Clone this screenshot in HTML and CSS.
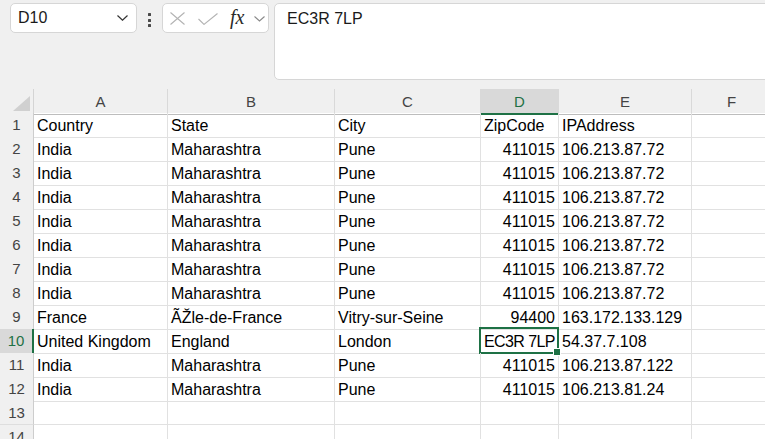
FILE: index.html
```html
<!DOCTYPE html>
<html lang="en">
<head>
<meta charset="utf-8">
<title>Sheet</title>
<link rel="stylesheet" href="styles.css">
</head>
<body>
<div class="app">
  <div class="toolbar">
    <div class="namebox">
      <span class="name">D10</span>
      <svg class="chev" width="11" height="6" viewBox="0 0 11 6"><polyline points="0.5,0.5 5.5,5.2 10.5,0.5" fill="none" stroke="#333" stroke-width="1.2"/></svg>
    </div>
    <div class="dots"><i></i><i></i><i></i></div>
    <div class="fxgroup">
      <svg class="ico-x" width="15" height="13" viewBox="0 0 15 13"><path d="M0.5 0.5 L14.5 12.5 M14.5 0.5 L0.5 12.5" stroke="#b3b3b3" stroke-width="1.1" fill="none"/></svg>
      <svg class="ico-check" width="20" height="12" viewBox="0 0 20 12"><polyline points="0.5,6 6,11.4 19.5,0.5" fill="none" stroke="#b3b3b3" stroke-width="1.1"/></svg>
      <span class="fx">fx</span>
      <svg class="ico-chev" width="11" height="6" viewBox="0 0 11 6"><polyline points="0.5,0.5 5.5,5 10.5,0.5" fill="none" stroke="#8a8a8a" stroke-width="1.1"/></svg>
    </div>
    <div class="formula">EC3R 7LP</div>
  </div>

  <div class="sheet">
    <div class="row head">
      <div class="corner"><svg width="17" height="15" viewBox="0 0 17 15"><polygon points="17,0 17,15 0,15" fill="#d0d0d0"/></svg></div>
      <div class="colh">A</div>
      <div class="colh">B</div>
      <div class="colh">C</div>
      <div class="colh sel">D</div>
      <div class="colh">E</div>
      <div class="colh">F</div>
    </div>

    <div class="row"><div class="rowh">1</div><div class="c">Country</div><div class="c">State</div><div class="c">City</div><div class="c">ZipCode</div><div class="c">IPAddress</div><div class="c"></div></div>
    <div class="row"><div class="rowh">2</div><div class="c">India</div><div class="c">Maharashtra</div><div class="c">Pune</div><div class="c num">411015</div><div class="c">106.213.87.72</div><div class="c"></div></div>
    <div class="row"><div class="rowh">3</div><div class="c">India</div><div class="c">Maharashtra</div><div class="c">Pune</div><div class="c num">411015</div><div class="c">106.213.87.72</div><div class="c"></div></div>
    <div class="row"><div class="rowh">4</div><div class="c">India</div><div class="c">Maharashtra</div><div class="c">Pune</div><div class="c num">411015</div><div class="c">106.213.87.72</div><div class="c"></div></div>
    <div class="row"><div class="rowh">5</div><div class="c">India</div><div class="c">Maharashtra</div><div class="c">Pune</div><div class="c num">411015</div><div class="c">106.213.87.72</div><div class="c"></div></div>
    <div class="row"><div class="rowh">6</div><div class="c">India</div><div class="c">Maharashtra</div><div class="c">Pune</div><div class="c num">411015</div><div class="c">106.213.87.72</div><div class="c"></div></div>
    <div class="row"><div class="rowh">7</div><div class="c">India</div><div class="c">Maharashtra</div><div class="c">Pune</div><div class="c num">411015</div><div class="c">106.213.87.72</div><div class="c"></div></div>
    <div class="row"><div class="rowh">8</div><div class="c">India</div><div class="c">Maharashtra</div><div class="c">Pune</div><div class="c num">411015</div><div class="c">106.213.87.72</div><div class="c"></div></div>
    <div class="row"><div class="rowh">9</div><div class="c">France</div><div class="c">ÃŽle-de-France</div><div class="c">Vitry-sur-Seine</div><div class="c num">94400</div><div class="c">163.172.133.129</div><div class="c"></div></div>
    <div class="row"><div class="rowh sel">10</div><div class="c">United Kingdom</div><div class="c">England</div><div class="c">London</div><div class="c active">EC3R 7LP</div><div class="c">54.37.7.108</div><div class="c"></div></div>
    <div class="row"><div class="rowh">11</div><div class="c">India</div><div class="c">Maharashtra</div><div class="c">Pune</div><div class="c num">411015</div><div class="c">106.213.87.122</div><div class="c"></div></div>
    <div class="row"><div class="rowh">12</div><div class="c">India</div><div class="c">Maharashtra</div><div class="c">Pune</div><div class="c num">411015</div><div class="c">106.213.81.24</div><div class="c"></div></div>
    <div class="row"><div class="rowh">13</div><div class="c"></div><div class="c"></div><div class="c"></div><div class="c"></div><div class="c"></div><div class="c"></div></div>
    <div class="row"><div class="rowh">14</div><div class="c"></div><div class="c"></div><div class="c"></div><div class="c"></div><div class="c"></div><div class="c"></div></div>
  </div>
</div>
</body>
</html>
```

FILE: styles.css
```css
* { box-sizing: border-box; }
html, body { margin: 0; padding: 0; }
body {
  width: 765px;
  height: 439px;
  overflow: hidden;
  background: #f0f0f0;
  font-family: "Liberation Sans", Arial, sans-serif;
  color: #000;
}
.app { width: 765px; height: 439px; overflow: hidden; }

.toolbar {
  height: 89px;
  display: flex;
  align-items: flex-start;
  padding: 3px 0 0 10px;
  background: #f0f0f0;
}
.toolbar > * { flex-shrink: 0; }
.namebox {
  width: 127px;
  height: 30px;
  background: #fff;
  border: 1px solid #d6d6d6;
  border-radius: 5px;
  display: flex;
  align-items: center;
  justify-content: space-between;
  padding: 0 8px 0 7px;
}
.name { font-size: 16px; color: #1a1a1a; }
.chev { display: block; }

.dots {
  width: 25px;
  height: 30px;
  display: flex;
  flex-direction: column;
  align-items: center;
  gap: 2.5px;
  padding-top: 10px;
}
.dots i {
  display: block;
  width: 3px;
  height: 3px;
  background: #4a4a4a;
  border-radius: 0.5px;
}

.fxgroup {
  width: 107px;
  height: 30px;
  background: #fff;
  border: 1px solid #d6d6d6;
  border-radius: 5px;
  display: flex;
  align-items: center;
  padding-left: 7px;
}
.ico-x { display: block; margin-top: 1px; }
.ico-check { display: block; margin-left: 13px; margin-top: 1px; }
.fx {
  margin-left: 12px;
  font-family: "Liberation Serif", "Times New Roman", serif;
  font-style: italic;
  font-size: 20px;
  color: #2a2a2a;
  line-height: 20px;
  width: 18px;
  margin-top: -2px;
}
.ico-chev { display: block; margin-left: 6px; margin-top: 1px; }

.formula {
  margin-left: 5px;
  width: 510px;
  height: 77px;
  background: #fff;
  border: 1px solid #d6d6d6;
  border-radius: 5px;
  padding: 6px 12px;
  font-size: 16px;
  color: #1a1a1a;
}

.sheet {
  background: #fff;
  height: 350px;
  overflow: hidden;
}
.row {
  display: grid;
  grid-template-columns: 34px 134px 167px 146px 78px 133px 80px;
  height: 24px;
}
.head { background: #f0f0f0; }
.corner {
  border-right: 1px solid #d4d4d4;
  border-bottom: 1px solid #bdbdbd;
  display: flex;
  align-items: flex-end;
  justify-content: flex-end;
  padding: 0 3px 3px 0;
}
.corner svg { display: block; }
.colh {
  border-right: 1px solid #d9d9d9;
  border-bottom: 1px solid #bdbdbd;
  text-align: center;
  font-size: 15px;
  line-height: 23px;
  padding-top: 1px;
  color: #444;
}
.colh.sel {
  background: #d9d9d9;
  color: #1e7145;
  border-bottom: 2px solid #1e7145;
}
.rowh {
  background: #f0f0f0;
  border-right: 1px solid #cdcdcd;
  border-bottom: 1px solid #dedede;
  text-align: center;
  font-size: 15px;
  line-height: 22px;
  padding-top: 1px;
  color: #444;
}
.rowh.sel {
  background: #d9d9d9;
  color: #1e7145;
  border-right: 2px solid #1e7145;
}
.c {
  border-right: 1px solid #e1e1e1;
  border-bottom: 1px solid #e1e1e1;
  font-size: 16px;
  line-height: 22px;
  padding: 2px 3px 0 3px;
  white-space: nowrap;
  overflow: visible;
  position: relative;
}
.c.num { text-align: right; }
.c.active { letter-spacing: -0.6px; }
.c.active::after {
  content: "";
  position: absolute;
  top: -2px;
  left: -2px;
  right: -1px;
  bottom: -1px;
  border: 2px solid #1e7145;
  pointer-events: none;
}
.c.active::before {
  content: "";
  position: absolute;
  right: -3px;
  bottom: -3px;
  width: 6px;
  height: 6px;
  background: #1e7145;
  border: 1px solid #fff;
  z-index: 2;
}
```
